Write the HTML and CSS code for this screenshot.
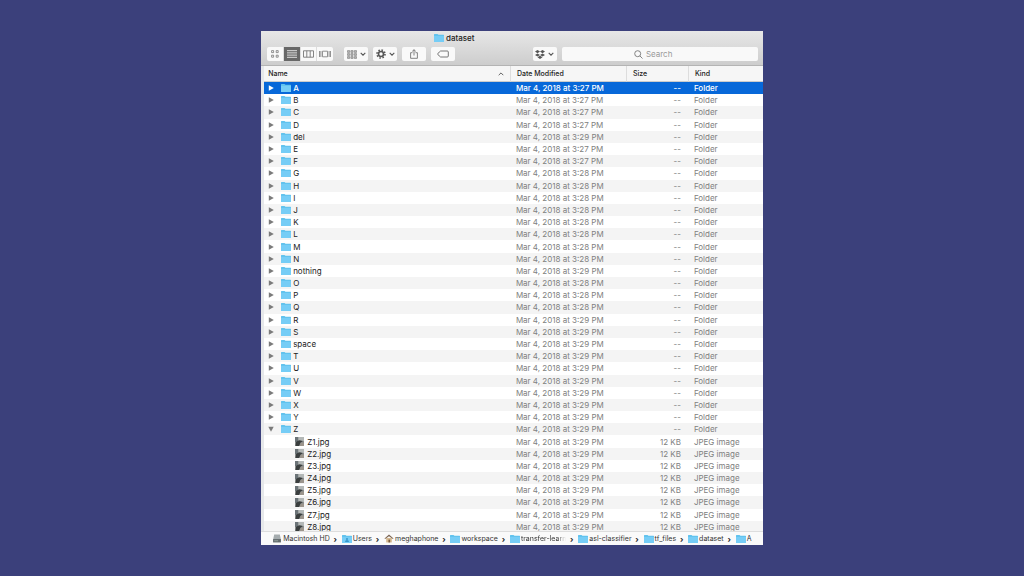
FILE: index.html
```html
<!DOCTYPE html>
<html lang="en">
<head>
    <meta charset="UTF-8">
    <meta name="viewport" content="width=device-width, initial-scale=1.0">
    <title>dataset</title>
    <link rel="stylesheet" href="styles.css">
</head>
<body>

    <!-- Shared icons -->
    <svg class="sprite" aria-hidden="true">
        <symbol id="folder" viewBox="0 0 20 16">
            <path d="M0 1q0-1 1-1h6l2 1.6h10q1 0 1 1V15q0 1-1 1H1q-1 0-1-1z" fill="#62c3ee"/>
            <path d="M0 4h20v11q0 1-1 1H1q-1 0-1-1z" fill="#76cdf6"/>
        </symbol>
        <symbol id="chevron" viewBox="0 0 6 4">
            <path d="M.7.8L3 3.1 5.3.8" fill="none" stroke="#555" stroke-width="1.1"/>
        </symbol>
        <symbol id="photo" viewBox="0 0 16 16">
            <path d="M0 0h16v16H0z" fill="#8d8f8e"/>
            <path d="M0 0h6v9H0z" fill="#6c7478"/>
            <path d="M6 0h10v7H6z" fill="#b4b8b7"/>
            <path d="M2 9q4-4 8-3l4 1-4 3-3 6H1z" fill="#3a3e3e"/>
            <path d="M10 10h6v6h-7z" fill="#9c958c"/>
        </symbol>
    </svg>

    <main class="window">
        <header class="toolbar">
            <h1 class="title"><svg class="folder"><use href="#folder"/></svg>dataset</h1>
            <div class="tools">
                <div class="views">
                    <button type="button" aria-label="Icons">
                        <svg width="8" height="8" viewBox="0 0 8 8" fill="none" stroke="#777" stroke-width=".8"><path d="M.6.6h2v2h-2zM5.2.6h2v2h-2zM.6 5.2h2v2h-2zM5.2 5.2h2v2h-2z"/></svg>
                    </button>
                    <button type="button" class="active" aria-label="List">
                        <svg width="10" height="8" viewBox="0 0 10 8" stroke="#fff" stroke-width=".8"><path d="M0 .7h10M0 2.9h10M0 5.1h10M0 7.3h10"/></svg>
                    </button>
                    <button type="button" aria-label="Columns">
                        <svg width="11" height="8" viewBox="0 0 11 8" fill="none" stroke="#777" stroke-width=".9"><path d="M.5.8h10v6.4H.5zM3.8.8v6.4M7.2.8v6.4"/></svg>
                    </button>
                    <button type="button" aria-label="Cover Flow">
                        <svg width="12" height="8" viewBox="0 0 12 8" fill="none" stroke="#777" stroke-width=".8"><path d="M3.5 1.2h5v5.6h-5zM.5 1v6M1.9 1v6M10.1 1v6M11.5 1v6"/></svg>
                    </button>
                </div>
                <button type="button" class="tool" aria-label="Arrange">
                    <svg width="10" height="9" viewBox="0 0 10 9" fill="#bbb" stroke="#777" stroke-width=".6"><path d="M.5.6h2.2v1.8H.5zM3.9.6h2.2v1.8H3.9zM7.3.6h2.2v1.8H7.3zM.5 3.6h2.2v1.8H.5zM3.9 3.6h2.2v1.8H3.9zM7.3 3.6h2.2v1.8H7.3zM.5 6.6h2.2v1.8H.5zM3.9 6.6h2.2v1.8H3.9zM7.3 6.6h2.2v1.8H7.3z"/></svg>
                    <svg width="6" height="4"><use href="#chevron"/></svg>
                </button>
                <button type="button" class="tool" aria-label="Action">
                    <svg width="10" height="10" viewBox="0 0 10 10" fill="none" stroke="#555"><circle cx="5" cy="5" r="2.5" stroke-width="1.6"/><circle cx="5" cy="5" r="4" stroke-width="1.6" stroke-dasharray="1.5 1.64"/></svg>
                    <svg width="6" height="4"><use href="#chevron"/></svg>
                </button>
                <button type="button" class="tool" aria-label="Share">
                    <svg width="10" height="10" viewBox="0 0 10 10" fill="none" stroke="#666" stroke-width=".8"><path d="M3.5 3.7H1.6v5.6h6.8V3.7H6.5M5 6.5V.8M3.2 2.4L5 .7l1.8 1.7"/></svg>
                </button>
                <button type="button" class="tool" aria-label="Tags">
                    <svg width="12" height="8" viewBox="0 0 12 8" fill="none" stroke="#666" stroke-width=".9"><path d="M3.6 1h6.7q1 0 1 1v4q0 1-1 1H3.6L.8 4.5q-.5-.5 0-1z"/></svg>
                </button>
                <button type="button" class="tool dropbox" aria-label="Dropbox">
                    <svg width="10" height="9" viewBox="0 0 10 9" fill="#555"><path d="M2.5 0L5 1.6 2.5 3.2 0 1.6zM7.5 0L10 1.6 7.5 3.2 5 1.6zM2.5 3.4L5 5 2.5 6.6 0 5zM7.5 3.4L10 5 7.5 6.6 5 5zM5 5.7l2.5 1.6L5 8.9 2.5 7.3z"/></svg>
                    <svg width="6" height="4"><use href="#chevron"/></svg>
                </button>
                <label class="search">
                    <svg width="9" height="9" viewBox="0 0 9 9" fill="none" stroke="#777" stroke-width=".9"><circle cx="3.7" cy="3.7" r="3"/><path d="M5.9 5.9l2.6 2.6"/></svg>
                    <input type="search" placeholder="Search" aria-label="Search">
                </label>
            </div>
        </header>

        <div class="files">
            <table>
                <thead>
                    <tr>
                        <th class="name">Name <svg width="6" height="4" viewBox="0 0 6 4"><path d="M.7 3.2L3 .9l2.3 2.3" fill="none" stroke="#555" stroke-width=".9"/></svg></th>
                        <th class="date">Date Modified</th>
                        <th class="size">Size</th>
                        <th class="kind">Kind</th>
                    </tr>
                </thead>
                <tbody id="fileRows"></tbody>
            </table>
        </div>

        <nav class="path" aria-label="Path">
            <a href="#"><svg class="place" viewBox="0 0 16 16"><path d="M3 1h10l2 9H1z" fill="#a5acae"/><path d="M1 9h14v6H1z" fill="#626a6c"/><path d="M3 12h7" stroke="#bcd0c4"/></svg>Macintosh HD</a>
            <a href="#"><svg class="folder" viewBox="0 0 20 16"><use href="#folder"/><circle cx="10" cy="8" r="2" fill="#3797cb"/><path d="M6 14q0-4 4-4t4 4z" fill="#3797cb"/></svg>Users</a>
            <a href="#"><svg class="place" viewBox="0 0 16 16"><path d="M3 7h10v8H3z" fill="#d5b991"/><path d="M0 8l8-7 8 7-1 1-7-5-7 5z" fill="#7b6350"/><path d="M7 10h3v5H7z" fill="#76583c"/></svg>meghaphone</a>
            <a href="#"><svg class="folder"><use href="#folder"/></svg>workspace</a>
            <a href="#"><svg class="folder"><use href="#folder"/></svg><span class="fade">transfer-learn</span></a>
            <a href="#"><svg class="folder"><use href="#folder"/></svg>asl-classifier</a>
            <a href="#"><svg class="folder"><use href="#folder"/></svg>tf_files</a>
            <a href="#"><svg class="folder"><use href="#folder"/></svg>dataset</a>
            <a href="#"><svg class="folder"><use href="#folder"/></svg>A</a>
        </nav>
    </main>

    <script src="script.js"></script>
</body>
</html>
```
FILE: styles.css
```css
* {
    box-sizing: border-box;
}
body {
    margin: 0;
    height: 100vh;
    padding: 31px 0;
    background-color: #3b407b;
    font-family: Inter, 'Liberation Sans', sans-serif;
    font-size: 7px;
    color: #222;
}
.sprite {
    display: none;
}
svg {
    flex: none;
}
button {
    padding: 0;
    border: 0;
    background: none;
}
.window {
    display: flex;
    flex-direction: column;
    width: 49%;
    min-width: 500px;
    height: 100%;
    margin: 0 auto;
    background-color: #fff;
}
.folder {
    width: 10px;
    height: 8px;
}

/* Toolbar */
.toolbar {
    height: 35px;
    padding: 2px 5px 0 6px;
    background: linear-gradient(#e7e7e7, #cdcdcd);
    border-bottom: 1px solid #b4b4b4;
}
.title {
    display: flex;
    align-items: center;
    gap: 2px;
    height: 10px;
    margin: 0 0 4px;
    padding-left: 34%;
    font-size: 8px;
    font-weight: 500;
}
.tools {
    display: flex;
    gap: 5px;
    height: 14px;
}
.views {
    display: flex;
    width: 66px;
    margin-right: 6px;
    background-color: #f9f9f9;
    border-radius: 2px;
    overflow: hidden;
}
.views button {
    display: flex;
    flex: 1;
    align-items: center;
    justify-content: center;
}
.views button + button {
    border-left: 1px solid #ddd;
}
.views .active {
    background-color: #686868;
}
.tool {
    display: flex;
    align-items: center;
    justify-content: center;
    gap: 3px;
    width: 24px;
    background-color: #f9f9f9;
    border-radius: 2px;
}
.dropbox {
    margin-left: auto;
}
.search {
    display: flex;
    align-items: center;
    justify-content: center;
    gap: 3px;
    width: 196px;
    background-color: #f9f9f9;
    border-radius: 2px;
}
.search input {
    width: 40px;
    padding: 0;
    border: 0;
    background: none;
    font: inherit;
    font-size: 8px;
    outline: none;
}
.search input::placeholder {
    color: #999;
}

/* File list */
.files {
    flex: 1;
    min-height: 0;
    padding-left: 3px;
    background: linear-gradient(90deg, #e6e8ea 3px, #fff 3px);
    overflow: hidden;
}
table {
    width: 100%;
    height: calc(100% + 2px);
    border-collapse: separate;
    border-spacing: 0;
    table-layout: fixed;
}
th {
    height: 16px;
    padding: 0 6px;
    background-color: #f6f6f6;
    border-right: 1px solid #ddd;
    border-bottom: 1px solid #ccc;
    font-weight: 500;
    line-height: 8px;
    text-align: left;
}
th.name {
    padding-left: 4px;
}
th.name svg {
    float: right;
    margin-top: 2px;
}
th.date {
    width: 116px;
}
th.size {
    width: 62px;
}
th.kind {
    width: 74px;
    border-right: 0;
}
td {
    height: 12px;
    padding: 0 8px 0 5px;
    color: #808080;
    font-size: 8px;
    line-height: 10px;
    white-space: nowrap;
}
td.size {
    text-align: right;
}
td.name {
    padding-left: 4px;
    color: #222;
}
tbody tr:nth-child(odd) td {
    background-color: #f4f4f4;
}
tbody tr.selected td {
    background-color: #0768d9;
    color: #fff;
    font-weight: 500;
}
.entry {
    display: flex;
    align-items: center;
    gap: 2px;
}
.entry button {
    display: flex;
    width: 8px;
    margin-right: 3px;
    color: #7b7b7b;
}
.selected .entry button {
    color: #fff;
}
.entry .open {
    transform: rotate(90deg);
}
.entry.child {
    gap: 3px;
    padding-left: 27px;
}

/* Path bar */
.path {
    display: flex;
    align-items: center;
    height: 14px;
    padding-left: 11px;
    background-color: #fafafa;
    border-top: 1px solid #ddd;
    white-space: nowrap;
}
.path a {
    display: flex;
    align-items: center;
    gap: 1px;
    color: #333;
    text-decoration: none;
}
.path a + a::before {
    content: "›";
    width: 11px;
    color: #222;
    font-size: 8px;
    font-weight: 700;
    line-height: 8px;
    text-align: center;
}
.place {
    width: 10px;
    height: 9px;
}
.fade {
    -webkit-mask-image: linear-gradient(90deg, #000 80%, transparent);
    mask-image: linear-gradient(90deg, #000 80%, transparent);
}
```
FILE: script.js
```js
const fileRows = document.getElementById('fileRows');

// Minute of the last change for each folder
const folders = [
    ['A', 27], ['B', 27], ['C', 27], ['D', 27], ['del', 29], ['E', 27], ['F', 27],
    ['G', 28], ['H', 28], ['I', 28], ['J', 28], ['K', 28], ['L', 28], ['M', 28],
    ['N', 28], ['nothing', 29], ['O', 28], ['P', 28], ['Q', 28], ['R', 29],
    ['S', 29], ['space', 29], ['T', 29], ['U', 29], ['V', 29], ['W', 29],
    ['X', 29], ['Y', 29], ['Z', 29]
];

function addRow(entry, minute, size, kind) {
    const row = fileRows.insertRow();
    row.innerHTML = `
        <td class="name">${entry}</td>
        <td>Mar 4, 2018 at 3:${minute} PM</td>
        <td class="size">${size}</td>
        <td>${kind}</td>
    `;
    return row;
}

folders.forEach(([name, minute]) => {
    const open = name === 'Z' ? 'open' : '';
    const row = addRow(`
        <div class="entry">
            <button type="button" aria-label="Toggle ${name}"><svg class="${open}" width="6" height="6" viewBox="0 0 6 6"><path d="M.8 .3L5.8 3 .8 5.7z" fill="currentColor"/></svg></button>
            <svg class="folder"><use href="#folder"/></svg>${name}
        </div>`, minute, '--', 'Folder');
    if (name === 'A') {
        row.className = 'selected';
    }
});

for (let i = 1; i <= 8; i++) {
    addRow(`<div class="entry child"><svg width="9" height="9"><use href="#photo"/></svg>Z${i}.jpg</div>`, 29, '12 KB', 'JPEG image');
}
```
